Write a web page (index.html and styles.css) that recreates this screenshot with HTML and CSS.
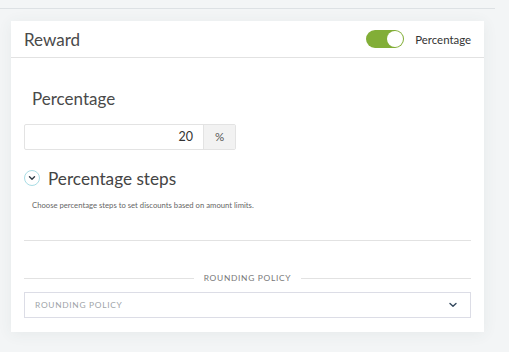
FILE: index.html
```html
<!DOCTYPE html>
<html lang="en">
<head>
    <meta charset="UTF-8">
    <title>Reward</title>
    <link rel="stylesheet" href="styles.css">
</head>
<body>
    <div class="top-bar"></div>

    <div class="card">
        <div class="card-header">
            <span class="card-title">Reward</span>
            <div class="switch-wrap">
                <span class="switch"><span class="knob"></span></span>
                <span class="switch-label">Percentage</span>
            </div>
        </div>

        <div class="card-body">
            <div class="field-label">Percentage</div>
            <div class="input-group">
                <div class="input">20</div>
                <div class="addon">%</div>
            </div>

            <div class="steps-row">
                <span class="circle-btn">
                    <svg width="8" height="6" viewBox="0 0 8 6"><path d="M1.5 1.8 L4 4.2 L6.5 1.8" fill="none" stroke="#2f3b45" stroke-width="1.4" stroke-linecap="round" stroke-linejoin="round"/></svg>
                </span>
                <span class="steps-title">Percentage steps</span>
            </div>
            <p class="hint">Choose percentage steps to set discounts based on amount limits.</p>

            <hr class="rule">

            <div class="divider"><span>ROUNDING POLICY</span></div>
            <div class="select">
                <span>ROUNDING POLICY</span>
                <svg width="10" height="6" viewBox="0 0 10 6"><path d="M2 1.5 L5 4.3 L8 1.5" fill="none" stroke="#34495e" stroke-width="1.4" stroke-linecap="round" stroke-linejoin="round"/></svg>
            </div>
        </div>
    </div>
</body>
</html>
```
FILE: styles.css
```css
body {
    margin: 0;
    font-family: "Lato", "Open Sans", sans-serif;
    background-color: #f3f5f6;
    color: #444;
    height: 352px;
    overflow: hidden;
}

.top-bar {
    width: 495px;
    height: 8px;
    border-bottom: 1px solid #dde1e4;
}

.card {
    margin: 12px 0 0 11px;
    width: 473px;
    background-color: #fff;
    box-shadow: 0 2px 14px rgba(60, 80, 90, 0.07);
}

.card-header {
    height: 36px;
    border-bottom: 1px solid #e2e2e2;
    display: flex;
    align-items: center;
    padding: 0 13px;
}

.card-title {
    font-size: 17px;
    color: #4a4a4a;
    flex: 1;
}

.switch-wrap {
    display: flex;
    align-items: center;
    gap: 11px;
}

.switch {
    width: 38px;
    height: 18px;
    border-radius: 9px;
    background-color: #82ae37;
    display: flex;
    justify-content: flex-end;
    align-items: center;
    padding: 0 1px;
    box-sizing: border-box;
}

.knob {
    width: 16px;
    height: 16px;
    border-radius: 50%;
    background-color: #fff;
}

.switch-label {
    font-size: 11.4px;
    color: #333;
}

.card-body {
    padding: 0 13px 14px 13px;
}

.field-label {
    font-size: 17px;
    color: #4a4a4a;
    padding: 30px 0 0 8px;
    height: 36px;
}

.input-group {
    display: flex;
    width: 212px;
    height: 26px;
    border: 1px solid #e3e3e3;
    box-sizing: border-box;
    border-radius: 2px;
}

.input {
    flex: 1;
    text-align: right;
    font-size: 12.5px;
    color: #333;
    padding-right: 10px;
    line-height: 24px;
    border-right: 1px solid #e3e3e3;
}

.addon {
    width: 31px;
    background-color: #f2f2f2;
    font-size: 11.5px;
    color: #555;
    text-align: center;
    line-height: 24px;
}

.steps-row {
    display: flex;
    align-items: center;
    gap: 8px;
    margin-top: 19px;
    height: 18px;
}

.circle-btn {
    width: 14px;
    height: 14px;
    border: 1px solid #a9dde5;
    border-radius: 50%;
    display: flex;
    align-items: center;
    justify-content: center;
}

.steps-title {
    font-size: 17.2px;
    color: #444;
}

.hint {
    font-size: 7.7px;
    line-height: 10px;
    color: #666;
    margin: 13px 0 0 8px;
}

.rule {
    border: none;
    border-top: 1px solid #e2e2e2;
    margin: 30px 0 0 0;
}

.divider {
    display: flex;
    align-items: center;
    gap: 10px;
    margin-top: 32px;
    font-size: 8.4px;
    line-height: 10px;
    letter-spacing: 0.7px;
    color: #777;
}

.divider::before,
.divider::after {
    content: '';
    flex: 1;
    border-top: 1px solid #e2e2e2;
}

.select {
    margin-top: 9px;
    height: 26px;
    border: 1px solid #dcdde6;
    box-sizing: border-box;
    display: flex;
    align-items: center;
    justify-content: space-between;
    padding: 0 12px 0 10px;
    font-size: 8.4px;
    letter-spacing: 0.7px;
    color: #9ea3a8;
}
```
